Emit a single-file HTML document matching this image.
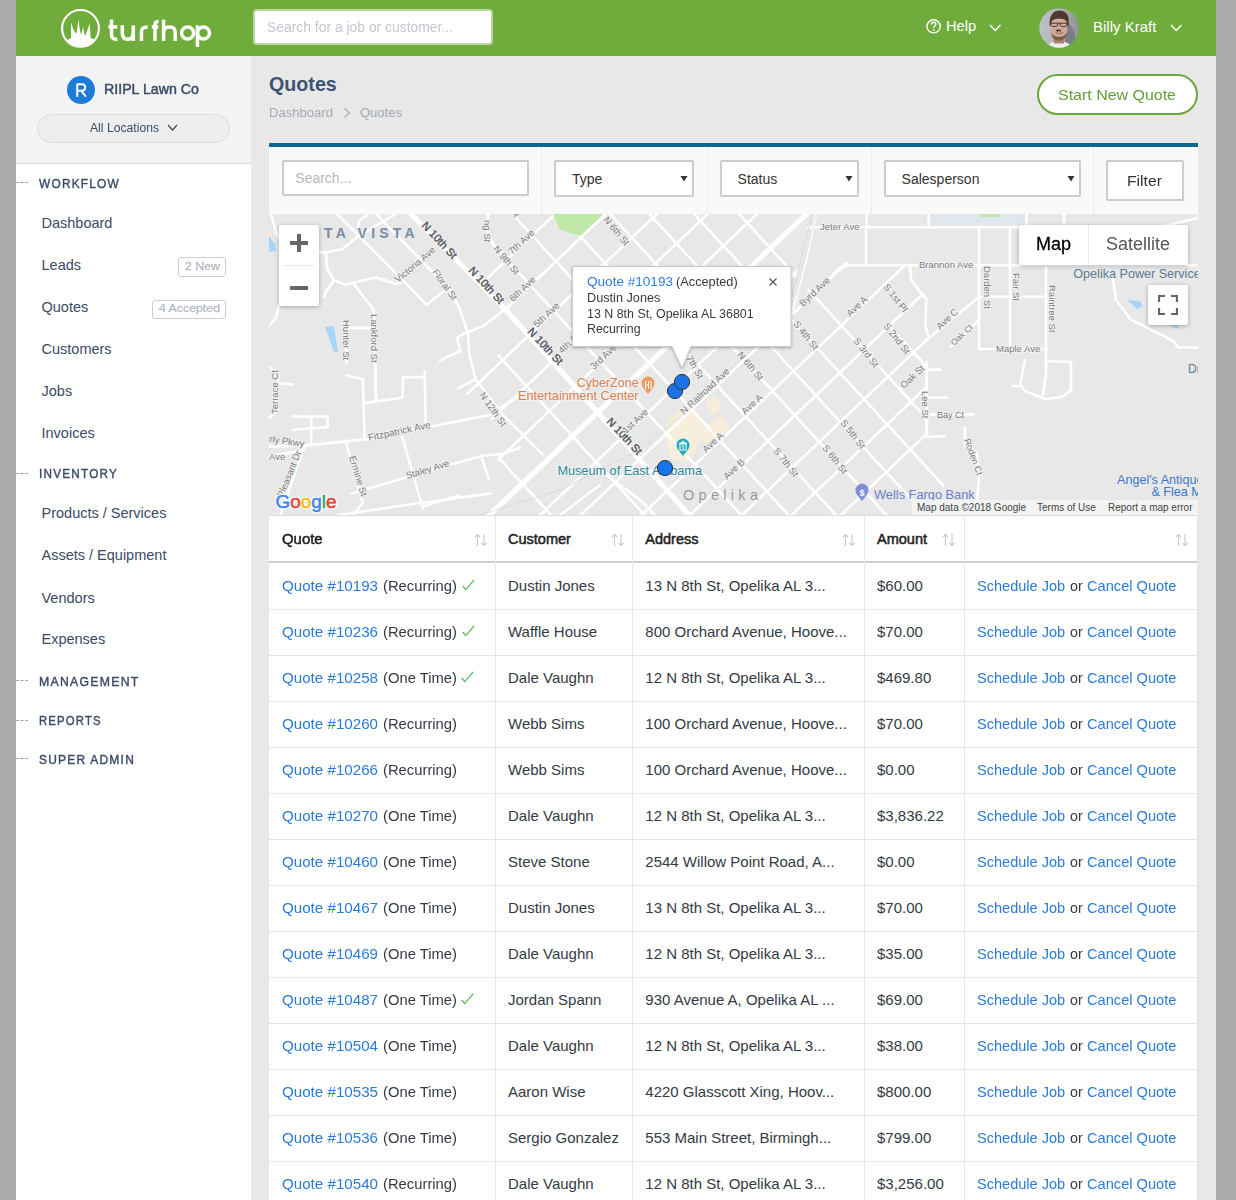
<!DOCTYPE html><html><head><meta charset="utf-8"><style>
html,body{margin:0;padding:0;width:1236px;height:1200px;overflow:hidden;background:#aaa}
body{position:relative;font-family:"Liberation Sans",sans-serif}
.b{position:absolute}
.t{position:absolute;white-space:nowrap;line-height:1;transform-origin:0 0}
</style></head><body>
<div class="b" style="left:0px;top:0px;width:16px;height:1200px;background:#aaaaaa"></div>
<div class="b" style="left:1216px;top:0px;width:20px;height:1200px;background:#aaaaaa"></div>
<div class="b" style="left:16px;top:0px;width:1200px;height:56px;background:#6fac3b"></div>
<div class="b" style="left:16px;top:56px;width:235px;height:107px;background:#f4f4f4"></div>
<div class="b" style="left:16px;top:163px;width:235px;height:1px;background:#dcdcdc"></div>
<div class="b" style="left:16px;top:164px;width:235px;height:1036px;background:#ffffff"></div>
<div class="b" style="left:251px;top:56px;width:965px;height:1144px;background:#e8e8e8"></div>
<svg class="b" style="left:58px;top:6px" width="46" height="46" viewBox="0 0 46 46">
<circle cx="22.5" cy="22.4" r="18.4" fill="none" stroke="#fff" stroke-width="2.1"/>
<path d="M9.6,34.1 L13,32 L13.2,15.9 Q15,25 18.4,27.6 L20.7,13.4 Q21.5,24 23,28.4 L25.3,20.9 Q25.8,27 27.2,29.9 L31.8,17.6 L32.6,31.8 L36.3,33.5 A18.2,18.2 0 0 1 9.3,34.4 L9.6,34.1 Z" fill="#fff"/>
</svg>
<svg class="b" style="left:100px;top:10px" width="120" height="42" viewBox="100 10 120 42">
<g fill="none" stroke="#fff" stroke-width="3.5">
<path d="M111.5,19.6 V34.5 Q111.5,39.2 116,39.2 H117.3"/>
<path d="M108.4,26.9 H117.3"/>
<path d="M122.3,25.3 V33 Q122.3,39.2 127.8,39.2 Q133.3,39.2 133.3,33"/>
<path d="M133.3,25.3 V40.9"/>
<path d="M141.4,40.9 V32 Q141.4,27 147.6,27"/>
<path d="M155,40.9 V24.5 Q155,21.4 158.5,21.4"/>
<path d="M151.8,26.9 H158.3"/>
<path d="M163.6,19.6 V40.9"/>
<path d="M163.6,32.5 Q163.6,27 169.4,27 Q175.2,27 175.2,32.5 V40.9"/>
<circle cx="187.6" cy="33.1" r="6"/>
<path d="M197.4,25.3 V47"/>
<circle cx="203.5" cy="33.1" r="6"/>
</g></svg>
<div class="b" style="left:253px;top:9px;width:240px;height:36px;background:#fff;border:2px solid #b9d89f;border-radius:4px;box-sizing:border-box"></div>
<div class="t" style="left:266.70px;top:19.53px;font-size:14px;color:#c3c7cf;transform:scaleX(0.9918);">Search for a job or customer...</div>
<svg class="b" style="left:925px;top:18px" width="18" height="18" viewBox="0 0 18 18">
<circle cx="8.6" cy="8.3" r="6.6" fill="none" stroke="#fff" stroke-width="1.4"/>
<path d="M6.4 6.6 C6.4 5 7.5 4.3 8.6 4.3 C9.9 4.3 10.9 5.1 10.9 6.3 C10.9 7.8 8.7 7.9 8.7 9.8" fill="none" stroke="#fff" stroke-width="1.4"/>
<circle cx="8.7" cy="11.9" r="0.95" fill="#fff"/>
</svg>
<div class="t" style="left:946.00px;top:19.22px;font-size:14.6px;color:#fff;">Help</div>
<svg class="b" style="left:988px;top:23px" width="14.5" height="9.5"><path d="M2 2 L7.25 7.5 L12.5 2" fill="none" stroke="#fff" stroke-width="1.4"/></svg>
<svg class="b" style="left:1039px;top:8px" width="40" height="40" viewBox="0 0 40 40">
<defs><clipPath id="av"><circle cx="20" cy="20" r="19.7"/></clipPath>
<filter id="bl" x="-20%" y="-20%" width="140%" height="140%"><feGaussianBlur stdDeviation="0.7"/></filter>
<linearGradient id="avbg" x1="0" x2="1" y1="0" y2="0"><stop offset="0" stop-color="#bfc0c4"/><stop offset="0.55" stop-color="#b0b2b6"/><stop offset="1" stop-color="#8f9195"/></linearGradient></defs>
<g clip-path="url(#av)">
<rect width="40" height="40" fill="url(#avbg)"/>
<g filter="url(#bl)">
<path d="M26 14 C34 16 38 26 36 40 L26 40 Z" fill="#7c7e83"/>
<path d="M8 40 C9 35 13 33.5 20 33.5 C27 33.5 31 35 32.5 40 Z" fill="#eeeeee"/>
<path d="M14.5 30 L25.5 30 L25 35.5 L15 35.5 Z" fill="#a88470"/>
<ellipse cx="20" cy="20.5" rx="8.4" ry="11" fill="#cfa996"/><rect x="12" y="10.5" width="16" height="8" fill="#d3ae9b"/>
<path d="M10.8 18 C9.5 8 14 2.5 20.5 2.5 C27 2.5 31 7 29.6 18 L28.3 17 C28 12.5 26 10.8 20 10.8 C14 10.8 12.2 12.5 12 17 Z" fill="#4b3a2f"/>
<path d="M12 24 C12.5 30 16 32.5 20 32.5 C24 32.5 27.5 30 28 24 C26.5 27.5 24 28.8 20 28.8 C16 28.8 13.5 27.5 12 24Z" fill="#7a5b4a"/>
<path d="M17 22 Q19.5 21 22 22 L21.5 23.5 Q19.5 22.8 17.5 23.5Z" fill="#3a2a24"/>
<path d="M16.5 24.5 Q20 26.5 24 24.5" stroke="#9a6a68" stroke-width="1.1" fill="none"/>
</g>
<path d="M11 15.2 H28.5 M11.6 15.5 C11.6 18 12.3 18.5 15 18.5 C18 18.5 18.7 18 18.9 15.5 M20.8 15.5 C21 18 21.7 18.5 24.6 18.5 C27.4 18.5 28 18 28 15.5" stroke="#3b3634" stroke-width="1" fill="none" filter="url(#bl)"/>
</g></svg>
<div class="t" style="left:1093.00px;top:18.78px;font-size:15px;color:#fff;">Billy Kraft</div>
<svg class="b" style="left:1168.5px;top:23px" width="14.5" height="9.5"><path d="M2 2 L7.25 7.5 L12.5 2" fill="none" stroke="#fff" stroke-width="1.4"/></svg>
<svg class="b" style="left:67px;top:76px" width="28" height="28" viewBox="0 0 28 28">
<circle cx="14" cy="14" r="14" fill="#1f7bd8"/>
<path d="M10.2 20 V8.3 H14.6 C16.9 8.3 18.2 9.7 18.2 11.6 C18.2 13.5 16.9 14.8 14.6 14.8 H10.2 M14.3 14.8 L18.4 20" fill="none" stroke="#fff" stroke-width="2" stroke-linejoin="round" stroke-linecap="round"/>
</svg>
<div class="t" style="left:104.00px;top:81.83px;font-size:14px;color:#3b4a66;-webkit-text-stroke:0.45px #3b4a66;transform:scaleX(1.0145);">RIIPL Lawn Co</div>
<div class="b" style="left:37px;top:114px;width:193px;height:29px;background:#eeeeee;border:1px solid #dedede;border-radius:15px;box-sizing:border-box"></div>
<div class="t" style="left:90.30px;top:121.74px;font-size:12px;color:#3b4a66;transform:scaleX(1.0141);">All Locations</div>
<svg class="b" style="left:165.5px;top:123px" width="13" height="9"><path d="M2 2 L6.5 7 L11 2" fill="none" stroke="#3b4a66" stroke-width="1.2"/></svg>
<div class="t" style="left:39.00px;top:177.51px;font-size:12.5px;color:#3b4a66;-webkit-text-stroke:0.4px #3b4a66;letter-spacing:1.3px;transform:scaleX(0.9485);">WORKFLOW</div>
<div class="b" style="left:16px;top:182.2px;width:12px;height:0;border-top:1px dashed #9aa3b3"></div>
<div class="t" style="left:41.50px;top:215.80px;font-size:14.5px;color:#3b4a66;">Dashboard</div>
<div class="t" style="left:41.50px;top:257.60px;font-size:14.5px;color:#3b4a66;">Leads</div>
<div class="t" style="left:41.50px;top:299.60px;font-size:14.5px;color:#3b4a66;">Quotes</div>
<div class="t" style="left:41.50px;top:341.60px;font-size:14.5px;color:#3b4a66;">Customers</div>
<div class="t" style="left:41.50px;top:383.60px;font-size:14.5px;color:#3b4a66;">Jobs</div>
<div class="t" style="left:41.50px;top:425.60px;font-size:14.5px;color:#3b4a66;">Invoices</div>
<div class="b" style="left:178px;top:257px;width:48px;height:19.5px;border:1px solid #c9ced6;border-radius:3px;box-sizing:border-box"></div>
<div class="t" style="left:184.50px;top:260.67px;font-size:11.5px;color:#b5bac4;-webkit-text-stroke:0.3px #b5bac4;transform:scaleX(1.0737);">2 New</div>
<div class="b" style="left:152px;top:299.5px;width:74px;height:19.0px;border:1px solid #c9ced6;border-radius:3px;box-sizing:border-box"></div>
<div class="t" style="left:158.50px;top:303.17px;font-size:11.5px;color:#b5bac4;-webkit-text-stroke:0.3px #b5bac4;transform:scaleX(1.0720);">4 Accepted</div>
<div class="t" style="left:39.00px;top:468.21px;font-size:12.5px;color:#3b4a66;-webkit-text-stroke:0.4px #3b4a66;letter-spacing:1.3px;transform:scaleX(0.9385);">INVENTORY</div>
<div class="b" style="left:16px;top:472.9px;width:12px;height:0;border-top:1px dashed #9aa3b3"></div>
<div class="t" style="left:41.50px;top:506.30px;font-size:14.5px;color:#3b4a66;">Products / Services</div>
<div class="t" style="left:41.50px;top:548.10px;font-size:14.5px;color:#3b4a66;">Assets / Equipment</div>
<div class="t" style="left:41.50px;top:590.60px;font-size:14.5px;color:#3b4a66;">Vendors</div>
<div class="t" style="left:41.50px;top:632.40px;font-size:14.5px;color:#3b4a66;">Expenses</div>
<div class="t" style="left:39.00px;top:675.51px;font-size:12.5px;color:#3b4a66;-webkit-text-stroke:0.4px #3b4a66;letter-spacing:1.3px;transform:scaleX(0.9806);">MANAGEMENT</div>
<div class="b" style="left:16px;top:680.2px;width:12px;height:0;border-top:1px dashed #9aa3b3"></div>
<div class="t" style="left:39.00px;top:714.91px;font-size:12.5px;color:#3b4a66;-webkit-text-stroke:0.4px #3b4a66;letter-spacing:1.3px;transform:scaleX(0.9048);">REPORTS</div>
<div class="b" style="left:16px;top:719.6px;width:12px;height:0;border-top:1px dashed #9aa3b3"></div>
<div class="t" style="left:39.00px;top:753.71px;font-size:12.5px;color:#3b4a66;-webkit-text-stroke:0.4px #3b4a66;letter-spacing:1.3px;transform:scaleX(0.9559);">SUPER ADMIN</div>
<div class="b" style="left:16px;top:758.4px;width:12px;height:0;border-top:1px dashed #9aa3b3"></div>
<div class="t" style="left:269.00px;top:75.06px;font-size:19.7px;color:#3e5372;font-weight:bold;">Quotes</div>
<div class="t" style="left:269.00px;top:105.69px;font-size:13px;color:#a3aab5;transform:scaleX(1.0063);">Dashboard</div>
<svg class="b" style="left:343px;top:107px" width="10" height="12"><path d="M1.5 1.5 L6.5 5.9 L1.5 10.3" fill="none" stroke="#a3aab5" stroke-width="1.2"/></svg>
<div class="t" style="left:360.00px;top:105.69px;font-size:13px;color:#a3aab5;">Quotes</div>
<div class="b" style="left:1037px;top:74px;width:161px;height:41px;background:#fff;border:2px solid #6aa83a;border-radius:21px;box-sizing:border-box"></div>
<div class="t" style="left:1058.00px;top:87.17px;font-size:15px;color:#5f9f33;transform:scaleX(1.0642);">Start New Quote</div>
<div class="b" style="left:269px;top:143px;width:929px;height:4px;background:#10688f"></div>
<div class="b" style="left:269px;top:147px;width:929px;height:67px;background:#f9f9f9"></div>
<div class="b" style="left:541px;top:147px;width:1px;height:67px;background:#ececec"></div>
<div class="b" style="left:707px;top:147px;width:1px;height:67px;background:#ececec"></div>
<div class="b" style="left:871px;top:147px;width:1px;height:67px;background:#ececec"></div>
<div class="b" style="left:1093px;top:147px;width:1px;height:67px;background:#ececec"></div>
<div class="b" style="left:282px;top:160px;width:247px;height:36px;background:#fff;border:2px solid #cccccc;border-radius:2px;box-sizing:border-box"></div>
<div class="t" style="left:295.30px;top:171.03px;font-size:14px;color:#b9b9b9;">Search...</div>
<div class="b" style="left:554px;top:160px;width:140px;height:37px;background:#fff;border:2px solid #cccccc;border-radius:2px;box-sizing:border-box"></div>
<div class="t" style="left:572.00px;top:172.43px;font-size:14px;color:#333;">Type</div>
<svg class="b" style="left:680px;top:175px" width="8" height="7"><path d="M0.5 1 L7.5 1 L4 6.5Z" fill="#333"/></svg>
<div class="b" style="left:720px;top:160px;width:139px;height:37px;background:#fff;border:2px solid #cccccc;border-radius:2px;box-sizing:border-box"></div>
<div class="t" style="left:737.60px;top:172.43px;font-size:14px;color:#333;">Status</div>
<svg class="b" style="left:845px;top:175px" width="8" height="7"><path d="M0.5 1 L7.5 1 L4 6.5Z" fill="#333"/></svg>
<div class="b" style="left:884px;top:160px;width:197px;height:37px;background:#fff;border:2px solid #cccccc;border-radius:2px;box-sizing:border-box"></div>
<div class="t" style="left:901.60px;top:172.43px;font-size:14px;color:#333;">Salesperson</div>
<svg class="b" style="left:1067px;top:175px" width="8" height="7"><path d="M0.5 1 L7.5 1 L4 6.5Z" fill="#333"/></svg>
<div class="b" style="left:1106px;top:160px;width:78px;height:41px;background:#fff;border:2px solid #cccccc;border-radius:2px;box-sizing:border-box"></div>
<div class="t" style="left:1127.20px;top:173.48px;font-size:15px;color:#333;transform:scaleX(1.0500);">Filter</div>
<div class="b" style="left:269px;top:214px;width:929px;height:301px;background:#e8e8e8;overflow:hidden"><svg width="929" height="301" viewBox="269 214 929 301" style="position:absolute;left:0;top:0">
<rect x="269" y="214" width="929" height="301" fill="#e8e8e8"/>
<path d="M929,214 L1026,214 L1026,223 L929,223 Z" fill="#dfe6ee"/>
<path d="M980,214 L1000,214 L1000,217 L980,217 Z" fill="#c0e8a8"/>
<path d="M325,327 L334,326 L338,352 L334,352 Z" fill="#a8d4f8"/>
<path d="M269,236 L275,244 L276,251 L269,252 Z" fill="#a8d4f8"/>
<path d="M1127,300 L1140,301 L1143,306 L1137,309 Z" fill="#a8d4f8"/>
<path d="M1168,324 L1180,322 L1177,329 Z" fill="#a8d4f8"/>
<path d="M668,420 L690,403 L708,425 L722,415 L730,428 L712,445 L700,440 L690,462 L672,460 L665,440 Z" fill="#f7efdc"/>
<path d="M705,402 L716,395 L722,410 L712,415 Z" fill="#f7efdc"/>
<g fill="none" stroke="#ffffff" stroke-linecap="round" stroke-linejoin="round">
<path d="M411.0,214.0 L501.0,305.0 L554.7,364.0 L689.0,515.0" stroke-width="5.2"/>
<path d="M335.2,661.3 L1423.3,-371.3" stroke-width="5.2"/>
<path d="M808.0,227.2 L1160.0,227.2 L1198.0,218.0" stroke-width="2.6"/>
<path d="M866.6,214.0 L866.6,227.0" stroke-width="2.6"/>
<path d="M928.6,214.0 L928.6,227.0" stroke-width="2.6"/>
<path d="M1026.5,214.0 L1026.5,227.0" stroke-width="2.6"/>
<path d="M1064.0,214.0 L1064.0,227.0" stroke-width="2.6"/>
<path d="M848.0,265.2 L1198.0,265.2" stroke-width="2.6"/>
<path d="M866.0,227.0 L866.0,265.0" stroke-width="2.6"/>
<path d="M979.0,227.0 L979.0,349.0 L1047.0,349.0" stroke-width="2.6"/>
<path d="M1010.0,227.0 L1010.0,349.0" stroke-width="2.6"/>
<path d="M1046.0,227.0 L1046.0,373.0 L1043.0,395.0" stroke-width="2.6"/>
<path d="M979.0,296.7 L1046.0,296.7" stroke-width="2.6"/>
<path d="M1046.0,361.0 L1071.0,362.0 L1071.0,390.0 L1062.0,397.0 L1045.0,399.0 L1025.0,391.0 L1020.0,385.0 L1025.0,360.0" stroke-width="2.6"/>
<path d="M1013.0,386.0 L1022.0,386.0" stroke-width="2.6"/>
<path d="M1112.9,278.0 L1116.0,300.0 L1130.8,319.7 L1173.8,341.2 L1178.3,347.5 L1200.0,347.5" stroke-width="2.6"/>
<path d="M910.2,266.3 L911.3,280.3 L923.0,295.5 L926.5,299.0 L925.3,325.8 L928.8,337.5" stroke-width="2.6"/>
<path d="M979.0,320.0 L951.0,346.8" stroke-width="2.6"/>
<path d="M926.5,362.0 L926.5,437.0 L945.0,436.0" stroke-width="2.6"/>
<path d="M926.5,369.6 L940.0,369.6" stroke-width="2.6"/>
<path d="M926.5,414.5 L974.0,414.5" stroke-width="2.6"/>
<path d="M926.5,397.7 L947.0,397.5" stroke-width="2.6"/>
<path d="M965.0,427.5 L965.0,445.0 L976.7,452.0 L979.0,480.0 L977.0,500.0 L965.0,507.0 L935.0,510.0" stroke-width="2.6"/>
<path d="M830.0,278.0 L840.0,268.0 L848.0,265.2" stroke-width="2.6"/>
<path d="M889.1,325.9 L921.0,360.5 L926.5,368.0" stroke-width="2.6"/>
<path d="M926.0,340.6 L979.0,296.7" stroke-width="2.6"/>
<path d="M816.0,214.0 L806.0,260.0 L792.0,313.0" stroke-width="2.6"/>
<path d="M337.4,214.0 L426.7,304.6 L444.9,290.4" stroke-width="2.6"/>
<path d="M376.3,214.0 L450.0,290.0 L459.1,307.2 L468.2,334.0 L469.3,354.0 L471.7,364.0 L475.5,379.0 L501.0,412.8" stroke-width="2.6"/>
<path d="M395.7,214.0 L356.8,237.3 L342.6,249.0 L324.5,252.8 L310.0,252.8" stroke-width="2.6"/>
<path d="M310.0,252.8 L326.0,252.8 L327.1,268.4 L333.5,280.0 L345.2,284.6 L376.3,277.4 L395.7,283.9 L400.8,282.6" stroke-width="2.6"/>
<path d="M333.5,281.3 L325.8,291.7 L324.5,296.8" stroke-width="2.6"/>
<path d="M354.2,284.6 L373.7,309.8 L375.0,334.0 L376.0,399.7" stroke-width="2.6"/>
<path d="M346.5,364.0 L346.5,327.9 L373.7,327.9" stroke-width="2.6"/>
<path d="M367.2,215.3 L359.4,220.5 L358.1,227.0" stroke-width="2.6"/>
<path d="M488.0,214.0 L488.0,233.0 L495.0,247.8" stroke-width="2.6"/>
<path d="M506.7,307.3 L498.5,314.3 L483.3,326.0 L462.0,334.5 L457.0,338.0 L460.4,351.0 L439.8,360.4" stroke-width="2.6"/>
<path d="M271.0,214.0 L276.0,232.0 L285.0,248.0" stroke-width="2.6"/>
<path d="M279.0,304.0 L276.0,318.0 L269.0,326.0" stroke-width="2.6"/>
<path d="M269.0,446.6 L304.7,445.6 L366.6,439.1 L428.5,426.9 L490.5,414.7 L501.0,407.2 L520.0,396.0" stroke-width="2.6"/>
<path d="M269.0,456.0 L304.7,450.3" stroke-width="2.6"/>
<path d="M304.7,445.6 L280.3,515.0" stroke-width="2.6"/>
<path d="M346.0,442.8 L362.8,502.9 L353.0,515.0" stroke-width="2.6"/>
<path d="M351.6,493.5 L409.8,476.6 L481.1,456.0 L501.0,454.0 L520.0,448.0" stroke-width="2.6"/>
<path d="M481.1,456.0 L488.6,478.5" stroke-width="2.6"/>
<path d="M402.3,437.2 L422.9,508.5" stroke-width="2.6"/>
<path d="M422.9,506.6 L458.6,495.4" stroke-width="2.6"/>
<path d="M338.4,515.0 L420.0,503.0 L490.5,493.5" stroke-width="2.6"/>
<path d="M346.0,375.3 L361.0,379.0 L362.8,379.0 L364.7,439.0" stroke-width="2.6"/>
<path d="M362.8,403.4 L402.3,397.8 L403.2,377.1 L424.8,377.1 L425.7,426.0" stroke-width="2.6"/>
<path d="M424.8,371.0 L424.8,377.1" stroke-width="2.6"/>
<path d="M375.0,364.0 L376.0,399.7" stroke-width="2.6"/>
<path d="M293.4,416.6 L327.2,416.6 L328.1,426.9 L293.4,429.7" stroke-width="2.6"/>
<path d="M311.2,416.6 L311.2,442.8" stroke-width="2.6"/>
<path d="M270.9,367.8 L278.4,375.3 L276.5,411.0 L269.0,418.4" stroke-width="2.6"/>
<path d="M278.4,383.0 L293.0,384.5" stroke-width="2.6"/>
<path d="M475.5,379.0 L458.6,388.4" stroke-width="2.6"/>
<path d="M501.0,412.8 L542.5,454.3" stroke-width="2.6"/>
<path d="M600.0,470.0 L640.0,500.0 L655.0,515.0" stroke-width="2.6"/>
<path d="M560.0,515.0 L600.0,485.0" stroke-width="2.6"/>
</g>
<clipPath id="gc"><path d="M470,214 L810,214 L792,300 L845,262 L906,262 L926,296 L929,437 L948,484 L900,520 L480,520 L499,456 L490,414 L457,388 L470,372 L502,352 L506,307 L476,284 L495,248 Z"/></clipPath>
<g fill="none" stroke="#ffffff" stroke-linecap="butt" clip-path="url(#gc)">
<path d="M-93.2,-187.4 L921.4,918.7" stroke-width="2.6"/>
<path d="M-43.2,-234.9 L971.4,871.2" stroke-width="2.6"/>
<path d="M8.4,-283.8 L1023.0,822.4" stroke-width="2.6"/>
<path d="M33.7,-307.9 L1048.3,798.3" stroke-width="2.6"/>
<path d="M59.1,-332.0 L1073.7,774.2" stroke-width="2.6"/>
<path d="M86.0,-357.4 L1100.6,748.7" stroke-width="2.6"/>
<path d="M107.0,-377.4 L1121.6,728.7" stroke-width="2.6"/>
<path d="M131.0,-400.1 L1145.5,706.0" stroke-width="2.6"/>
<path d="M154.9,-422.8 L1169.5,683.3" stroke-width="2.6"/>
<path d="M145.6,602.5 L1016.1,-223.6" stroke-width="2.6"/>
<path d="M169.3,628.3 L1039.8,-197.8" stroke-width="2.6"/>
<path d="M192.9,654.1 L1063.5,-171.9" stroke-width="2.6"/>
<path d="M216.6,680.0 L1087.1,-146.1" stroke-width="2.6"/>
<path d="M239.6,705.0 L1110.1,-121.1" stroke-width="2.6"/>
<path d="M286.3,755.9 L1156.8,-70.2" stroke-width="2.6"/>
<path d="M305.2,776.6 L1175.7,-49.5" stroke-width="2.6"/>
<path d="M333.6,807.5 L1204.1,-18.6" stroke-width="2.6"/>
<path d="M356.0,831.9 L1226.5,5.8" stroke-width="2.6"/>
<path d="M380.3,858.4 L1250.8,32.3" stroke-width="2.6"/>
<path d="M403.3,883.5 L1273.8,57.4" stroke-width="2.6"/>
<path d="M426.3,908.6 L1296.8,82.5" stroke-width="2.6"/>
</g>
<path d="M553,214 L603,214 L580,236 L560,230 Z" fill="#c0e8a8"/>
<g fill="none" stroke="#d4d4d4" stroke-width="0.7"><path d="M812,214 L792,296 L760,340 L700,400 L640,450 L560,490 L480,515"/><path d="M816,214 L796,296"/></g>
<text x="324" y="238" font-size="14" fill="#7a8ba3" font-weight="bold" text-anchor="start" letter-spacing="4.2" font-family="Liberation Sans">TA VISTA</text>
<text x="421" y="226" font-size="11" fill="#5c6168" font-weight="normal" text-anchor="start" transform="rotate(47 421 226)" stroke="#f2f2f2" stroke-width="2" paint-order="stroke" font-family="Liberation Sans">N 10th St</text>
<text x="421" y="226" font-size="11" fill="#5c6168" stroke="#5c6168" stroke-width="0.25" font-weight="normal" text-anchor="start" transform="rotate(47 421 226)" font-family="Liberation Sans">N 10th St</text>
<text x="468" y="271" font-size="11" fill="#5c6168" font-weight="normal" text-anchor="start" transform="rotate(47 468 271)" stroke="#f2f2f2" stroke-width="2" paint-order="stroke" font-family="Liberation Sans">N 10th St</text>
<text x="468" y="271" font-size="11" fill="#5c6168" stroke="#5c6168" stroke-width="0.25" font-weight="normal" text-anchor="start" transform="rotate(47 468 271)" font-family="Liberation Sans">N 10th St</text>
<text x="527" y="332" font-size="11" fill="#5c6168" font-weight="normal" text-anchor="start" transform="rotate(47 527 332)" stroke="#f2f2f2" stroke-width="2" paint-order="stroke" font-family="Liberation Sans">N 10th St</text>
<text x="527" y="332" font-size="11" fill="#5c6168" stroke="#5c6168" stroke-width="0.25" font-weight="normal" text-anchor="start" transform="rotate(47 527 332)" font-family="Liberation Sans">N 10th St</text>
<text x="606" y="422" font-size="11" fill="#5c6168" font-weight="normal" text-anchor="start" transform="rotate(47 606 422)" stroke="#f2f2f2" stroke-width="2" paint-order="stroke" font-family="Liberation Sans">N 10th St</text>
<text x="606" y="422" font-size="11" fill="#5c6168" stroke="#5c6168" stroke-width="0.25" font-weight="normal" text-anchor="start" transform="rotate(47 606 422)" font-family="Liberation Sans">N 10th St</text>
<text x="398" y="283" font-size="9.5" fill="#7b7b7b" font-weight="normal" text-anchor="start" transform="rotate(-40 398 283)" stroke="#f2f2f2" stroke-width="2" paint-order="stroke" font-family="Liberation Sans">Victoria Ave</text>
<text x="432" y="272" font-size="9.5" fill="#7b7b7b" font-weight="normal" text-anchor="start" transform="rotate(55 432 272)" stroke="#f2f2f2" stroke-width="2" paint-order="stroke" font-family="Liberation Sans">Floral St</text>
<text x="343" y="320" font-size="9.5" fill="#7b7b7b" font-weight="normal" text-anchor="start" transform="rotate(90 343 320)" stroke="#f2f2f2" stroke-width="2" paint-order="stroke" font-family="Liberation Sans">Hunter St</text>
<text x="371" y="314" font-size="9.5" fill="#7b7b7b" font-weight="normal" text-anchor="start" transform="rotate(90 371 314)" stroke="#f2f2f2" stroke-width="2" paint-order="stroke" font-family="Liberation Sans">Lankford St</text>
<text x="278" y="414" font-size="9.5" fill="#7b7b7b" font-weight="normal" text-anchor="start" transform="rotate(-90 278 414)" stroke="#f2f2f2" stroke-width="2" paint-order="stroke" font-family="Liberation Sans">Terrace Ct</text>
<text x="369" y="441" font-size="9.8" fill="#7b7b7b" font-weight="normal" text-anchor="start" transform="rotate(-12 369 441)" stroke="#f2f2f2" stroke-width="2" paint-order="stroke" font-family="Liberation Sans">Fitzpatrick Ave</text>
<text x="349" y="457" font-size="9.5" fill="#7b7b7b" font-weight="normal" text-anchor="start" transform="rotate(73 349 457)" stroke="#f2f2f2" stroke-width="2" paint-order="stroke" font-family="Liberation Sans">Ermine St</text>
<text x="407" y="479" font-size="9.5" fill="#7b7b7b" font-weight="normal" text-anchor="start" transform="rotate(-17 407 479)" stroke="#f2f2f2" stroke-width="2" paint-order="stroke" font-family="Liberation Sans">Staley Ave</text>
<text x="269" y="442" font-size="9.5" fill="#7b7b7b" font-weight="normal" text-anchor="start" transform="rotate(8 269 442)" stroke="#f2f2f2" stroke-width="2" paint-order="stroke" font-family="Liberation Sans">rly Pkwy</text>
<text x="269" y="460" font-size="9.5" fill="#7b7b7b" font-weight="normal" text-anchor="start" stroke="#f2f2f2" stroke-width="2" paint-order="stroke" font-family="Liberation Sans">Ave</text>
<text x="283" y="498" font-size="9.5" fill="#7b7b7b" font-weight="normal" text-anchor="start" transform="rotate(-68 283 498)" stroke="#f2f2f2" stroke-width="2" paint-order="stroke" font-family="Liberation Sans">Pleasant Dr</text>
<text x="479" y="395" font-size="9.5" fill="#7b7b7b" font-weight="normal" text-anchor="start" transform="rotate(55 479 395)" stroke="#f2f2f2" stroke-width="2" paint-order="stroke" font-family="Liberation Sans">N 12th St</text>
<text x="493" y="249" font-size="9.5" fill="#7b7b7b" font-weight="normal" text-anchor="start" transform="rotate(50 493 249)" stroke="#f2f2f2" stroke-width="2" paint-order="stroke" font-family="Liberation Sans">N 9th St</text>
<text x="484" y="220" font-size="9.5" fill="#7b7b7b" font-weight="normal" text-anchor="start" transform="rotate(90 484 220)" stroke="#f2f2f2" stroke-width="2" paint-order="stroke" font-family="Liberation Sans">ng St</text>
<text x="510" y="210" font-size="9.5" fill="#7b7b7b" font-weight="normal" text-anchor="start" transform="rotate(60 510 210)" stroke="#f2f2f2" stroke-width="2" paint-order="stroke" font-family="Liberation Sans">St</text>
<text x="512" y="255" font-size="9.5" fill="#7b7b7b" font-weight="normal" text-anchor="start" transform="rotate(-43 512 255)" stroke="#f2f2f2" stroke-width="2" paint-order="stroke" font-family="Liberation Sans">7th Ave</text>
<text x="513" y="302" font-size="9.5" fill="#7b7b7b" font-weight="normal" text-anchor="start" transform="rotate(-43 513 302)" stroke="#f2f2f2" stroke-width="2" paint-order="stroke" font-family="Liberation Sans">6th Ave</text>
<text x="537" y="328" font-size="9.5" fill="#7b7b7b" font-weight="normal" text-anchor="start" transform="rotate(-43 537 328)" stroke="#f2f2f2" stroke-width="2" paint-order="stroke" font-family="Liberation Sans">5th Ave</text>
<text x="562" y="354" font-size="9.5" fill="#7b7b7b" font-weight="normal" text-anchor="start" transform="rotate(-43 562 354)" stroke="#f2f2f2" stroke-width="2" paint-order="stroke" font-family="Liberation Sans">4th Ave</text>
<text x="594" y="370" font-size="9.5" fill="#7b7b7b" font-weight="normal" text-anchor="start" transform="rotate(-43 594 370)" stroke="#f2f2f2" stroke-width="2" paint-order="stroke" font-family="Liberation Sans">3rd Ave</text>
<text x="603" y="220" font-size="9.5" fill="#7b7b7b" font-weight="normal" text-anchor="start" transform="rotate(50 603 220)" stroke="#f2f2f2" stroke-width="2" paint-order="stroke" font-family="Liberation Sans">N 6th St</text>
<text x="626" y="434" font-size="9.5" fill="#7b7b7b" font-weight="normal" text-anchor="start" transform="rotate(-43 626 434)" stroke="#f2f2f2" stroke-width="2" paint-order="stroke" font-family="Liberation Sans">1st Ave</text>
<text x="686" y="358" font-size="9.5" fill="#7b7b7b" font-weight="normal" text-anchor="start" transform="rotate(60 686 358)" stroke="#f2f2f2" stroke-width="2" paint-order="stroke" font-family="Liberation Sans">7th St</text>
<text x="684" y="415" font-size="9.5" fill="#7b7b7b" font-weight="normal" text-anchor="start" transform="rotate(-43 684 415)" stroke="#f2f2f2" stroke-width="2" paint-order="stroke" font-family="Liberation Sans">N Railroad Ave</text>
<text x="737" y="355" font-size="9.5" fill="#7b7b7b" font-weight="normal" text-anchor="start" transform="rotate(50 737 355)" stroke="#f2f2f2" stroke-width="2" paint-order="stroke" font-family="Liberation Sans">N 6th St</text>
<text x="745" y="415" font-size="9.5" fill="#7b7b7b" font-weight="normal" text-anchor="start" transform="rotate(-43 745 415)" stroke="#f2f2f2" stroke-width="2" paint-order="stroke" font-family="Liberation Sans">Ave A</text>
<text x="706" y="453" font-size="9.5" fill="#7b7b7b" font-weight="normal" text-anchor="start" transform="rotate(-43 706 453)" stroke="#f2f2f2" stroke-width="2" paint-order="stroke" font-family="Liberation Sans">Ave A</text>
<text x="727" y="480" font-size="9.5" fill="#7b7b7b" font-weight="normal" text-anchor="start" transform="rotate(-43 727 480)" stroke="#f2f2f2" stroke-width="2" paint-order="stroke" font-family="Liberation Sans">Ave B</text>
<text x="773" y="451" font-size="9.5" fill="#7b7b7b" font-weight="normal" text-anchor="start" transform="rotate(52 773 451)" stroke="#f2f2f2" stroke-width="2" paint-order="stroke" font-family="Liberation Sans">S 7th St</text>
<text x="822" y="448" font-size="9.5" fill="#7b7b7b" font-weight="normal" text-anchor="start" transform="rotate(52 822 448)" stroke="#f2f2f2" stroke-width="2" paint-order="stroke" font-family="Liberation Sans">S 6th St</text>
<text x="840" y="423" font-size="9.5" fill="#7b7b7b" font-weight="normal" text-anchor="start" transform="rotate(52 840 423)" stroke="#f2f2f2" stroke-width="2" paint-order="stroke" font-family="Liberation Sans">S 5th St</text>
<text x="793" y="324" font-size="9.5" fill="#7b7b7b" font-weight="normal" text-anchor="start" transform="rotate(52 793 324)" stroke="#f2f2f2" stroke-width="2" paint-order="stroke" font-family="Liberation Sans">S 4th St</text>
<text x="853" y="341" font-size="9.5" fill="#7b7b7b" font-weight="normal" text-anchor="start" transform="rotate(52 853 341)" stroke="#f2f2f2" stroke-width="2" paint-order="stroke" font-family="Liberation Sans">S 3rd St</text>
<text x="883" y="326" font-size="9.5" fill="#7b7b7b" font-weight="normal" text-anchor="start" transform="rotate(52 883 326)" stroke="#f2f2f2" stroke-width="2" paint-order="stroke" font-family="Liberation Sans">S 2nd St</text>
<text x="883" y="287" font-size="9.5" fill="#7b7b7b" font-weight="normal" text-anchor="start" transform="rotate(52 883 287)" stroke="#f2f2f2" stroke-width="2" paint-order="stroke" font-family="Liberation Sans">S 1st Pl</text>
<text x="803" y="307" font-size="9.5" fill="#7b7b7b" font-weight="normal" text-anchor="start" transform="rotate(-43 803 307)" stroke="#f2f2f2" stroke-width="2" paint-order="stroke" font-family="Liberation Sans">Byrd Ave</text>
<text x="850" y="317" font-size="9.5" fill="#7b7b7b" font-weight="normal" text-anchor="start" transform="rotate(-43 850 317)" stroke="#f2f2f2" stroke-width="2" paint-order="stroke" font-family="Liberation Sans">Ave A</text>
<text x="940" y="330" font-size="9.5" fill="#7b7b7b" font-weight="normal" text-anchor="start" transform="rotate(-43 940 330)" stroke="#f2f2f2" stroke-width="2" paint-order="stroke" font-family="Liberation Sans">Ave C</text>
<text x="954" y="346" font-size="8.5" fill="#7b7b7b" font-weight="normal" text-anchor="start" transform="rotate(-43 954 346)" stroke="#f2f2f2" stroke-width="2" paint-order="stroke" font-family="Liberation Sans">Oak Ct</text>
<text x="904" y="389" font-size="9.5" fill="#7b7b7b" font-weight="normal" text-anchor="start" transform="rotate(-43 904 389)" stroke="#f2f2f2" stroke-width="2" paint-order="stroke" font-family="Liberation Sans">Oak St</text>
<text x="922" y="391" font-size="9.5" fill="#7b7b7b" font-weight="normal" text-anchor="start" transform="rotate(90 922 391)" stroke="#f2f2f2" stroke-width="2" paint-order="stroke" font-family="Liberation Sans">Lee St</text>
<text x="937" y="418" font-size="9" fill="#7b7b7b" font-weight="normal" text-anchor="start" font-family="Liberation Sans">Bay Ct</text>
<text x="964" y="440" font-size="9" fill="#7b7b7b" font-weight="normal" text-anchor="start" transform="rotate(70 964 440)" stroke="#f2f2f2" stroke-width="2" paint-order="stroke" font-family="Liberation Sans">Roden Ct</text>
<text x="820" y="230" font-size="9.5" fill="#7b7b7b" font-weight="normal" text-anchor="start" stroke="#f2f2f2" stroke-width="2" paint-order="stroke" font-family="Liberation Sans">Jeter Ave</text>
<text x="919" y="268" font-size="9.5" fill="#7b7b7b" font-weight="normal" text-anchor="start" stroke="#f2f2f2" stroke-width="2" paint-order="stroke" font-family="Liberation Sans">Brannon Ave</text>
<text x="984" y="266" font-size="9.5" fill="#7b7b7b" font-weight="normal" text-anchor="start" transform="rotate(90 984 266)" stroke="#f2f2f2" stroke-width="2" paint-order="stroke" font-family="Liberation Sans">Darden St</text>
<text x="1013" y="273" font-size="9.5" fill="#7b7b7b" font-weight="normal" text-anchor="start" transform="rotate(90 1013 273)" stroke="#f2f2f2" stroke-width="2" paint-order="stroke" font-family="Liberation Sans">Fair St</text>
<text x="1049" y="285" font-size="9.5" fill="#7b7b7b" font-weight="normal" text-anchor="start" transform="rotate(90 1049 285)" stroke="#f2f2f2" stroke-width="2" paint-order="stroke" font-family="Liberation Sans">Raintree St</text>
<text x="996" y="352" font-size="9.5" fill="#7b7b7b" font-weight="normal" text-anchor="start" stroke="#f2f2f2" stroke-width="2" paint-order="stroke" font-family="Liberation Sans">Maple Ave</text>
<text x="683" y="500" font-size="14.5" fill="#9a9a9a" font-weight="normal" text-anchor="start" letter-spacing="4.3" font-family="Liberation Sans">Opelika</text>
<text x="1073.3" y="277.5" font-size="12.6" fill="#5c7b8f" font-weight="normal" text-anchor="start" font-family="Liberation Sans">Opelika Power Service</text>
<text x="1188" y="373" font-size="12" fill="#5c7b8f" font-weight="normal" text-anchor="start" font-family="Liberation Sans">Dr</text>
<text x="1117" y="484" font-size="12.6" fill="#3c78c8" font-weight="normal" text-anchor="start" font-family="Liberation Sans">Angel's Antiques</text>
<text x="1151.4" y="496" font-size="12.6" fill="#3c78c8" font-weight="normal" text-anchor="start" font-family="Liberation Sans">&amp; Flea Market</text>
<text x="874" y="498.5" font-size="12.8" fill="#6e7dc8" font-weight="normal" text-anchor="start" font-family="Liberation Sans">Wells Fargo Bank</text>
<text x="638.6" y="387" font-size="12.5" fill="#d9804f" font-weight="normal" text-anchor="end" stroke="#f2f2f2" stroke-width="2" paint-order="stroke" font-family="Liberation Sans">CyberZone</text>
<text x="638.6" y="399.5" font-size="12.7" fill="#d9804f" font-weight="normal" text-anchor="end" stroke="#f2f2f2" stroke-width="2" paint-order="stroke" font-family="Liberation Sans">Entertainment Center</text>
<text x="629.7" y="474.5" font-size="12.7" fill="#2a8a9a" font-weight="normal" text-anchor="middle" stroke="#f2f2f2" stroke-width="2" paint-order="stroke" font-family="Liberation Sans">Museum of East Alabama</text>
<path d="M648,394 C645,390 641.5,387 641.5,383 A6.5,6.5 0 1 1 654.5,383 C654.5,387 651,390 648,394Z" fill="#f09b5f"/>
<path d="M645.5,381 V389 M648.5,381 V389 M645.5,385 H648.5 M651,381 V389" stroke="#fff" stroke-width="1"/>
<path d="M683,456 C680,452 676.5,449 676.5,445 A6.5,6.5 0 1 1 689.5,445 C689.5,449 686,452 683,456Z" fill="#22aebd"/>
<path d="M679,450 H687 M680,449 V445 M683,449 V445 M686,449 V445 M679,444 L683,441.5 L687,444Z" stroke="#fff" stroke-width="1" fill="#fff"/>
<path d="M862,501 C859,497 855.5,494 855.5,490 A6.5,6.5 0 1 1 868.5,490 C868.5,494 865,497 862,501Z" fill="#7f8ed8"/>
<text x="862" y="496" font-size="9" font-weight="bold" fill="#fff" text-anchor="middle" font-family="Liberation Sans">$</text>
<text x="275.5" y="507.5" font-size="18" textLength="61" lengthAdjust="spacingAndGlyphs" font-family="Liberation Sans" fill="#fff" stroke="#fff" stroke-width="2.6">Google</text>
<text x="275.5" y="507.5" font-size="18" textLength="61" lengthAdjust="spacingAndGlyphs" font-family="Liberation Sans" stroke-width="0.55"><tspan fill="#4285f4" stroke="#4285f4">G</tspan><tspan fill="#ea4335" stroke="#ea4335">o</tspan><tspan fill="#fbbc05" stroke="#fbbc05">o</tspan><tspan fill="#4285f4" stroke="#4285f4">g</tspan><tspan fill="#34a853" stroke="#34a853">l</tspan><tspan fill="#ea4335" stroke="#ea4335">e</tspan></text>
<rect x="912" y="500" width="286" height="15" fill="#f5f5f5" fill-opacity="0.85"/>
<text x="917" y="511" font-size="10" fill="#444" font-family="Liberation Sans">Map data ©2018 Google</text>
<text x="1037" y="511" font-size="10" fill="#444" font-family="Liberation Sans">Terms of Use</text>
<text x="1108" y="511" font-size="10" fill="#444" font-family="Liberation Sans">Report a map error</text>
<circle cx="675" cy="391" r="7.6" fill="#1a73e8" stroke="#333" stroke-width="1"/>
<circle cx="682" cy="382" r="7.6" fill="#1a73e8" stroke="#333" stroke-width="1"/>
<circle cx="665" cy="468" r="7.6" fill="#1a73e8" stroke="#333" stroke-width="1"/>
</svg></div>
<div class="b" style="left:279px;top:225px;width:40px;height:81px;background:#fff;border-radius:2px;box-shadow:0 1px 4px rgba(0,0,0,0.3)"></div>
<div class="b" style="left:290px;top:241px;width:18px;height:4px;background:#666"></div>
<div class="b" style="left:297px;top:234px;width:4px;height:18px;background:#666"></div>
<div class="b" style="left:284px;top:265px;width:30px;height:1px;background:#e6e6e6"></div>
<div class="b" style="left:290px;top:286px;width:18px;height:4px;background:#666"></div>
<div class="b" style="left:1019px;top:225px;width:169px;height:40px;background:#fff;border-radius:2px;box-shadow:0 1px 4px rgba(0,0,0,0.3)"></div>
<div class="b" style="left:1088px;top:225px;width:1px;height:40px;background:#ebebeb"></div>
<div class="t" style="left:1036.40px;top:235.94px;font-size:17.5px;color:#000;transform:scaleX(1.0281);font-weight:500;-webkit-text-stroke:0.3px #000;">Map</div>
<div class="t" style="left:1106.00px;top:235.94px;font-size:17.5px;color:#565656;transform:scaleX(1.0280);">Satellite</div>
<div class="b" style="left:1148px;top:285px;width:40px;height:40px;background:#fff;border-radius:2px;box-shadow:0 1px 4px rgba(0,0,0,0.3)"></div>
<svg class="b" style="left:1158px;top:295px" width="20" height="20"><path d="M1 7 V1 H7 M13 1 H19 V7 M19 13 V19 H13 M7 19 H1 V13" fill="none" stroke="#666" stroke-width="2.2"/></svg>
<svg class="b" style="left:566px;top:260px" width="232" height="116"><defs><filter id="sh" x="-10%" y="-10%" width="120%" height="130%"><feDropShadow dx="0" dy="1" stdDeviation="1.5" flood-color="#000" flood-opacity="0.3"/></filter></defs><path d="M6.5 6.5 H225 V86.5 H125 L116 108 L106 86.5 H6.5 Z" fill="#fff" stroke="#c8c8c8" stroke-width="1" filter="url(#sh)"/></svg>
<div class="t" style="left:586.60px;top:275.38px;font-size:13px;color:#2d7fd8;transform:scaleX(1.0436);">Quote #10193</div>
<div class="t" style="left:676.00px;top:275.38px;font-size:13px;color:#3a3a3a;transform:scaleX(0.9815);">(Accepted)</div>
<div class="t" style="left:586.60px;top:291.49px;font-size:13px;color:#3a3a3a;transform:scaleX(0.9767);">Dustin Jones</div>
<div class="t" style="left:586.60px;top:306.88px;font-size:13px;color:#3a3a3a;transform:scaleX(0.9552);">13 N 8th St, Opelika AL 36801</div>
<div class="t" style="left:586.60px;top:321.58px;font-size:13px;color:#3a3a3a;transform:scaleX(0.9511);">Recurring</div>
<svg class="b" style="left:768px;top:277px" width="10" height="10"><path d="M1.5 1.5 L8.5 8.5 M8.5 1.5 L1.5 8.5" stroke="#555" stroke-width="1.2"/></svg>
<div class="b" style="left:269px;top:515px;width:929px;height:685px;background:#fff"></div>
<div class="b" style="left:269px;top:515px;width:929px;height:1px;background:#dddddd"></div>
<div class="b" style="left:269px;top:561px;width:929px;height:2px;background:#cfcfcf"></div>
<div class="b" style="left:495px;top:516px;width:1px;height:684px;background:#e6e6e6"></div>
<div class="b" style="left:632px;top:516px;width:1px;height:684px;background:#e6e6e6"></div>
<div class="b" style="left:864px;top:516px;width:1px;height:684px;background:#e6e6e6"></div>
<div class="b" style="left:964px;top:516px;width:1px;height:684px;background:#e6e6e6"></div>
<div class="b" style="left:1197px;top:515px;width:1px;height:685px;background:#e6e6e6"></div>
<div class="t" style="left:282.00px;top:532.00px;font-size:14.5px;color:#222;-webkit-text-stroke:0.5px #222;transform:scaleX(1.0279);">Quote</div>
<div class="t" style="left:508.00px;top:532.00px;font-size:14.5px;color:#222;-webkit-text-stroke:0.5px #222;">Customer</div>
<div class="t" style="left:645.30px;top:532.00px;font-size:14.5px;color:#222;-webkit-text-stroke:0.5px #222;">Address</div>
<div class="t" style="left:877.00px;top:532.00px;font-size:14.5px;color:#222;-webkit-text-stroke:0.5px #222;">Amount</div>
<svg class="b" style="left:473.5px;top:533px" width="14" height="14"><path d="M3.5 13 V1.5 M1 4 L3.5 1.5 L6 4 M10 1 V12.5 M7.5 10 L10 12.5 L12.5 10" fill="none" stroke="#c8c8c8" stroke-width="1.1"/></svg>
<svg class="b" style="left:610.5px;top:533px" width="14" height="14"><path d="M3.5 13 V1.5 M1 4 L3.5 1.5 L6 4 M10 1 V12.5 M7.5 10 L10 12.5 L12.5 10" fill="none" stroke="#c8c8c8" stroke-width="1.1"/></svg>
<svg class="b" style="left:842px;top:533px" width="14" height="14"><path d="M3.5 13 V1.5 M1 4 L3.5 1.5 L6 4 M10 1 V12.5 M7.5 10 L10 12.5 L12.5 10" fill="none" stroke="#c8c8c8" stroke-width="1.1"/></svg>
<svg class="b" style="left:942px;top:533px" width="14" height="14"><path d="M3.5 13 V1.5 M1 4 L3.5 1.5 L6 4 M10 1 V12.5 M7.5 10 L10 12.5 L12.5 10" fill="none" stroke="#c8c8c8" stroke-width="1.1"/></svg>
<svg class="b" style="left:1175px;top:533px" width="14" height="14"><path d="M3.5 13 V1.5 M1 4 L3.5 1.5 L6 4 M10 1 V12.5 M7.5 10 L10 12.5 L12.5 10" fill="none" stroke="#c8c8c8" stroke-width="1.1"/></svg>
<div class="t" style="left:282.00px;top:577.57px;font-size:15px;color:#2b7bd6;transform:scaleX(1.0096);">Quote #10193</div>
<div class="t" style="left:383.00px;top:577.57px;font-size:15px;color:#333a44;transform:scaleX(0.9865);">(Recurring)</div>
<svg class="b" style="left:461.5px;top:579.4px" width="13" height="12"><path d="M0.8 7 L3.8 10.6 L12.2 0.8" fill="none" stroke="#5cb85c" stroke-width="1.3"/></svg>
<div class="t" style="left:508.00px;top:577.57px;font-size:15px;color:#333a44;">Dustin Jones</div>
<div class="t" style="left:645.30px;top:577.57px;font-size:15px;color:#333a44;">13 N 8th St, Opelika AL 3...</div>
<div class="t" style="left:877.00px;top:577.57px;font-size:15px;color:#333a44;">$60.00</div>
<div class="t" style="left:976.90px;top:577.57px;font-size:15px;color:#2b7bd6;transform:scaleX(0.9692);">Schedule Job</div>
<div class="t" style="left:1069.60px;top:577.57px;font-size:15px;color:#333a44;transform:scaleX(0.9522);">or</div>
<div class="t" style="left:1087.00px;top:577.57px;font-size:15px;color:#2b7bd6;transform:scaleX(0.9747);">Cancel Quote</div>
<div class="b" style="left:269px;top:609px;width:929px;height:1px;background:#e6e6e6"></div>
<div class="t" style="left:282.00px;top:623.57px;font-size:15px;color:#2b7bd6;transform:scaleX(1.0096);">Quote #10236</div>
<div class="t" style="left:383.00px;top:623.57px;font-size:15px;color:#333a44;transform:scaleX(0.9865);">(Recurring)</div>
<svg class="b" style="left:461.5px;top:625.4px" width="13" height="12"><path d="M0.8 7 L3.8 10.6 L12.2 0.8" fill="none" stroke="#5cb85c" stroke-width="1.3"/></svg>
<div class="t" style="left:508.00px;top:623.57px;font-size:15px;color:#333a44;">Waffle House</div>
<div class="t" style="left:645.30px;top:623.57px;font-size:15px;color:#333a44;">800 Orchard Avenue, Hoove...</div>
<div class="t" style="left:877.00px;top:623.57px;font-size:15px;color:#333a44;">$70.00</div>
<div class="t" style="left:976.90px;top:623.57px;font-size:15px;color:#2b7bd6;transform:scaleX(0.9692);">Schedule Job</div>
<div class="t" style="left:1069.60px;top:623.57px;font-size:15px;color:#333a44;transform:scaleX(0.9522);">or</div>
<div class="t" style="left:1087.00px;top:623.57px;font-size:15px;color:#2b7bd6;transform:scaleX(0.9747);">Cancel Quote</div>
<div class="b" style="left:269px;top:655px;width:929px;height:1px;background:#e6e6e6"></div>
<div class="t" style="left:282.00px;top:669.57px;font-size:15px;color:#2b7bd6;transform:scaleX(1.0096);">Quote #10258</div>
<div class="t" style="left:383.00px;top:669.57px;font-size:15px;color:#333a44;transform:scaleX(0.9865);">(One Time)</div>
<svg class="b" style="left:461.4997687976855px;top:671.4px" width="13" height="12"><path d="M0.8 7 L3.8 10.6 L12.2 0.8" fill="none" stroke="#5cb85c" stroke-width="1.3"/></svg>
<div class="t" style="left:508.00px;top:669.57px;font-size:15px;color:#333a44;">Dale Vaughn</div>
<div class="t" style="left:645.30px;top:669.57px;font-size:15px;color:#333a44;">12 N 8th St, Opelika AL 3...</div>
<div class="t" style="left:877.00px;top:669.57px;font-size:15px;color:#333a44;">$469.80</div>
<div class="t" style="left:976.90px;top:669.57px;font-size:15px;color:#2b7bd6;transform:scaleX(0.9692);">Schedule Job</div>
<div class="t" style="left:1069.60px;top:669.57px;font-size:15px;color:#333a44;transform:scaleX(0.9522);">or</div>
<div class="t" style="left:1087.00px;top:669.57px;font-size:15px;color:#2b7bd6;transform:scaleX(0.9747);">Cancel Quote</div>
<div class="b" style="left:269px;top:701px;width:929px;height:1px;background:#e6e6e6"></div>
<div class="t" style="left:282.00px;top:715.57px;font-size:15px;color:#2b7bd6;transform:scaleX(1.0096);">Quote #10260</div>
<div class="t" style="left:383.00px;top:715.57px;font-size:15px;color:#333a44;transform:scaleX(0.9865);">(Recurring)</div>
<div class="t" style="left:508.00px;top:715.57px;font-size:15px;color:#333a44;">Webb Sims</div>
<div class="t" style="left:645.30px;top:715.57px;font-size:15px;color:#333a44;">100 Orchard Avenue, Hoove...</div>
<div class="t" style="left:877.00px;top:715.57px;font-size:15px;color:#333a44;">$70.00</div>
<div class="t" style="left:976.90px;top:715.57px;font-size:15px;color:#2b7bd6;transform:scaleX(0.9692);">Schedule Job</div>
<div class="t" style="left:1069.60px;top:715.57px;font-size:15px;color:#333a44;transform:scaleX(0.9522);">or</div>
<div class="t" style="left:1087.00px;top:715.57px;font-size:15px;color:#2b7bd6;transform:scaleX(0.9747);">Cancel Quote</div>
<div class="b" style="left:269px;top:747px;width:929px;height:1px;background:#e6e6e6"></div>
<div class="t" style="left:282.00px;top:761.57px;font-size:15px;color:#2b7bd6;transform:scaleX(1.0096);">Quote #10266</div>
<div class="t" style="left:383.00px;top:761.57px;font-size:15px;color:#333a44;transform:scaleX(0.9865);">(Recurring)</div>
<div class="t" style="left:508.00px;top:761.57px;font-size:15px;color:#333a44;">Webb Sims</div>
<div class="t" style="left:645.30px;top:761.57px;font-size:15px;color:#333a44;">100 Orchard Avenue, Hoove...</div>
<div class="t" style="left:877.00px;top:761.57px;font-size:15px;color:#333a44;">$0.00</div>
<div class="t" style="left:976.90px;top:761.57px;font-size:15px;color:#2b7bd6;transform:scaleX(0.9692);">Schedule Job</div>
<div class="t" style="left:1069.60px;top:761.57px;font-size:15px;color:#333a44;transform:scaleX(0.9522);">or</div>
<div class="t" style="left:1087.00px;top:761.57px;font-size:15px;color:#2b7bd6;transform:scaleX(0.9747);">Cancel Quote</div>
<div class="b" style="left:269px;top:793px;width:929px;height:1px;background:#e6e6e6"></div>
<div class="t" style="left:282.00px;top:807.57px;font-size:15px;color:#2b7bd6;transform:scaleX(1.0096);">Quote #10270</div>
<div class="t" style="left:383.00px;top:807.57px;font-size:15px;color:#333a44;transform:scaleX(0.9865);">(One Time)</div>
<div class="t" style="left:508.00px;top:807.57px;font-size:15px;color:#333a44;">Dale Vaughn</div>
<div class="t" style="left:645.30px;top:807.57px;font-size:15px;color:#333a44;">12 N 8th St, Opelika AL 3...</div>
<div class="t" style="left:877.00px;top:807.57px;font-size:15px;color:#333a44;">$3,836.22</div>
<div class="t" style="left:976.90px;top:807.57px;font-size:15px;color:#2b7bd6;transform:scaleX(0.9692);">Schedule Job</div>
<div class="t" style="left:1069.60px;top:807.57px;font-size:15px;color:#333a44;transform:scaleX(0.9522);">or</div>
<div class="t" style="left:1087.00px;top:807.57px;font-size:15px;color:#2b7bd6;transform:scaleX(0.9747);">Cancel Quote</div>
<div class="b" style="left:269px;top:839px;width:929px;height:1px;background:#e6e6e6"></div>
<div class="t" style="left:282.00px;top:853.57px;font-size:15px;color:#2b7bd6;transform:scaleX(1.0096);">Quote #10460</div>
<div class="t" style="left:383.00px;top:853.57px;font-size:15px;color:#333a44;transform:scaleX(0.9865);">(One Time)</div>
<div class="t" style="left:508.00px;top:853.57px;font-size:15px;color:#333a44;">Steve Stone</div>
<div class="t" style="left:645.30px;top:853.57px;font-size:15px;color:#333a44;">2544 Willow Point Road, A...</div>
<div class="t" style="left:877.00px;top:853.57px;font-size:15px;color:#333a44;">$0.00</div>
<div class="t" style="left:976.90px;top:853.57px;font-size:15px;color:#2b7bd6;transform:scaleX(0.9692);">Schedule Job</div>
<div class="t" style="left:1069.60px;top:853.57px;font-size:15px;color:#333a44;transform:scaleX(0.9522);">or</div>
<div class="t" style="left:1087.00px;top:853.57px;font-size:15px;color:#2b7bd6;transform:scaleX(0.9747);">Cancel Quote</div>
<div class="b" style="left:269px;top:885px;width:929px;height:1px;background:#e6e6e6"></div>
<div class="t" style="left:282.00px;top:899.57px;font-size:15px;color:#2b7bd6;transform:scaleX(1.0096);">Quote #10467</div>
<div class="t" style="left:383.00px;top:899.57px;font-size:15px;color:#333a44;transform:scaleX(0.9865);">(One Time)</div>
<div class="t" style="left:508.00px;top:899.57px;font-size:15px;color:#333a44;">Dustin Jones</div>
<div class="t" style="left:645.30px;top:899.57px;font-size:15px;color:#333a44;">13 N 8th St, Opelika AL 3...</div>
<div class="t" style="left:877.00px;top:899.57px;font-size:15px;color:#333a44;">$70.00</div>
<div class="t" style="left:976.90px;top:899.57px;font-size:15px;color:#2b7bd6;transform:scaleX(0.9692);">Schedule Job</div>
<div class="t" style="left:1069.60px;top:899.57px;font-size:15px;color:#333a44;transform:scaleX(0.9522);">or</div>
<div class="t" style="left:1087.00px;top:899.57px;font-size:15px;color:#2b7bd6;transform:scaleX(0.9747);">Cancel Quote</div>
<div class="b" style="left:269px;top:931px;width:929px;height:1px;background:#e6e6e6"></div>
<div class="t" style="left:282.00px;top:945.57px;font-size:15px;color:#2b7bd6;transform:scaleX(1.0096);">Quote #10469</div>
<div class="t" style="left:383.00px;top:945.57px;font-size:15px;color:#333a44;transform:scaleX(0.9865);">(One Time)</div>
<div class="t" style="left:508.00px;top:945.57px;font-size:15px;color:#333a44;">Dale Vaughn</div>
<div class="t" style="left:645.30px;top:945.57px;font-size:15px;color:#333a44;">12 N 8th St, Opelika AL 3...</div>
<div class="t" style="left:877.00px;top:945.57px;font-size:15px;color:#333a44;">$35.00</div>
<div class="t" style="left:976.90px;top:945.57px;font-size:15px;color:#2b7bd6;transform:scaleX(0.9692);">Schedule Job</div>
<div class="t" style="left:1069.60px;top:945.57px;font-size:15px;color:#333a44;transform:scaleX(0.9522);">or</div>
<div class="t" style="left:1087.00px;top:945.57px;font-size:15px;color:#2b7bd6;transform:scaleX(0.9747);">Cancel Quote</div>
<div class="b" style="left:269px;top:977px;width:929px;height:1px;background:#e6e6e6"></div>
<div class="t" style="left:282.00px;top:991.57px;font-size:15px;color:#2b7bd6;transform:scaleX(1.0096);">Quote #10487</div>
<div class="t" style="left:383.00px;top:991.57px;font-size:15px;color:#333a44;transform:scaleX(0.9865);">(One Time)</div>
<svg class="b" style="left:461.4997687976855px;top:993.4px" width="13" height="12"><path d="M0.8 7 L3.8 10.6 L12.2 0.8" fill="none" stroke="#5cb85c" stroke-width="1.3"/></svg>
<div class="t" style="left:508.00px;top:991.57px;font-size:15px;color:#333a44;">Jordan Spann</div>
<div class="t" style="left:645.30px;top:991.57px;font-size:15px;color:#333a44;">930 Avenue A, Opelika AL ...</div>
<div class="t" style="left:877.00px;top:991.57px;font-size:15px;color:#333a44;">$69.00</div>
<div class="t" style="left:976.90px;top:991.57px;font-size:15px;color:#2b7bd6;transform:scaleX(0.9692);">Schedule Job</div>
<div class="t" style="left:1069.60px;top:991.57px;font-size:15px;color:#333a44;transform:scaleX(0.9522);">or</div>
<div class="t" style="left:1087.00px;top:991.57px;font-size:15px;color:#2b7bd6;transform:scaleX(0.9747);">Cancel Quote</div>
<div class="b" style="left:269px;top:1023px;width:929px;height:1px;background:#e6e6e6"></div>
<div class="t" style="left:282.00px;top:1037.58px;font-size:15px;color:#2b7bd6;transform:scaleX(1.0096);">Quote #10504</div>
<div class="t" style="left:383.00px;top:1037.58px;font-size:15px;color:#333a44;transform:scaleX(0.9865);">(One Time)</div>
<div class="t" style="left:508.00px;top:1037.58px;font-size:15px;color:#333a44;">Dale Vaughn</div>
<div class="t" style="left:645.30px;top:1037.58px;font-size:15px;color:#333a44;">12 N 8th St, Opelika AL 3...</div>
<div class="t" style="left:877.00px;top:1037.58px;font-size:15px;color:#333a44;">$38.00</div>
<div class="t" style="left:976.90px;top:1037.58px;font-size:15px;color:#2b7bd6;transform:scaleX(0.9692);">Schedule Job</div>
<div class="t" style="left:1069.60px;top:1037.58px;font-size:15px;color:#333a44;transform:scaleX(0.9522);">or</div>
<div class="t" style="left:1087.00px;top:1037.58px;font-size:15px;color:#2b7bd6;transform:scaleX(0.9747);">Cancel Quote</div>
<div class="b" style="left:269px;top:1069px;width:929px;height:1px;background:#e6e6e6"></div>
<div class="t" style="left:282.00px;top:1083.58px;font-size:15px;color:#2b7bd6;transform:scaleX(1.0096);">Quote #10535</div>
<div class="t" style="left:383.00px;top:1083.58px;font-size:15px;color:#333a44;transform:scaleX(0.9865);">(One Time)</div>
<div class="t" style="left:508.00px;top:1083.58px;font-size:15px;color:#333a44;">Aaron Wise</div>
<div class="t" style="left:645.30px;top:1083.58px;font-size:15px;color:#333a44;">4220 Glasscott Xing, Hoov...</div>
<div class="t" style="left:877.00px;top:1083.58px;font-size:15px;color:#333a44;">$800.00</div>
<div class="t" style="left:976.90px;top:1083.58px;font-size:15px;color:#2b7bd6;transform:scaleX(0.9692);">Schedule Job</div>
<div class="t" style="left:1069.60px;top:1083.58px;font-size:15px;color:#333a44;transform:scaleX(0.9522);">or</div>
<div class="t" style="left:1087.00px;top:1083.58px;font-size:15px;color:#2b7bd6;transform:scaleX(0.9747);">Cancel Quote</div>
<div class="b" style="left:269px;top:1115px;width:929px;height:1px;background:#e6e6e6"></div>
<div class="t" style="left:282.00px;top:1129.58px;font-size:15px;color:#2b7bd6;transform:scaleX(1.0096);">Quote #10536</div>
<div class="t" style="left:383.00px;top:1129.58px;font-size:15px;color:#333a44;transform:scaleX(0.9865);">(One Time)</div>
<div class="t" style="left:508.00px;top:1129.58px;font-size:15px;color:#333a44;">Sergio Gonzalez</div>
<div class="t" style="left:645.30px;top:1129.58px;font-size:15px;color:#333a44;">553 Main Street, Birmingh...</div>
<div class="t" style="left:877.00px;top:1129.58px;font-size:15px;color:#333a44;">$799.00</div>
<div class="t" style="left:976.90px;top:1129.58px;font-size:15px;color:#2b7bd6;transform:scaleX(0.9692);">Schedule Job</div>
<div class="t" style="left:1069.60px;top:1129.58px;font-size:15px;color:#333a44;transform:scaleX(0.9522);">or</div>
<div class="t" style="left:1087.00px;top:1129.58px;font-size:15px;color:#2b7bd6;transform:scaleX(0.9747);">Cancel Quote</div>
<div class="b" style="left:269px;top:1161px;width:929px;height:1px;background:#e6e6e6"></div>
<div class="t" style="left:282.00px;top:1175.58px;font-size:15px;color:#2b7bd6;transform:scaleX(1.0096);">Quote #10540</div>
<div class="t" style="left:383.00px;top:1175.58px;font-size:15px;color:#333a44;transform:scaleX(0.9865);">(Recurring)</div>
<div class="t" style="left:508.00px;top:1175.58px;font-size:15px;color:#333a44;">Dale Vaughn</div>
<div class="t" style="left:645.30px;top:1175.58px;font-size:15px;color:#333a44;">12 N 8th St, Opelika AL 3...</div>
<div class="t" style="left:877.00px;top:1175.58px;font-size:15px;color:#333a44;">$3,256.00</div>
<div class="t" style="left:976.90px;top:1175.58px;font-size:15px;color:#2b7bd6;transform:scaleX(0.9692);">Schedule Job</div>
<div class="t" style="left:1069.60px;top:1175.58px;font-size:15px;color:#333a44;transform:scaleX(0.9522);">or</div>
<div class="t" style="left:1087.00px;top:1175.58px;font-size:15px;color:#2b7bd6;transform:scaleX(0.9747);">Cancel Quote</div>
</body></html>
